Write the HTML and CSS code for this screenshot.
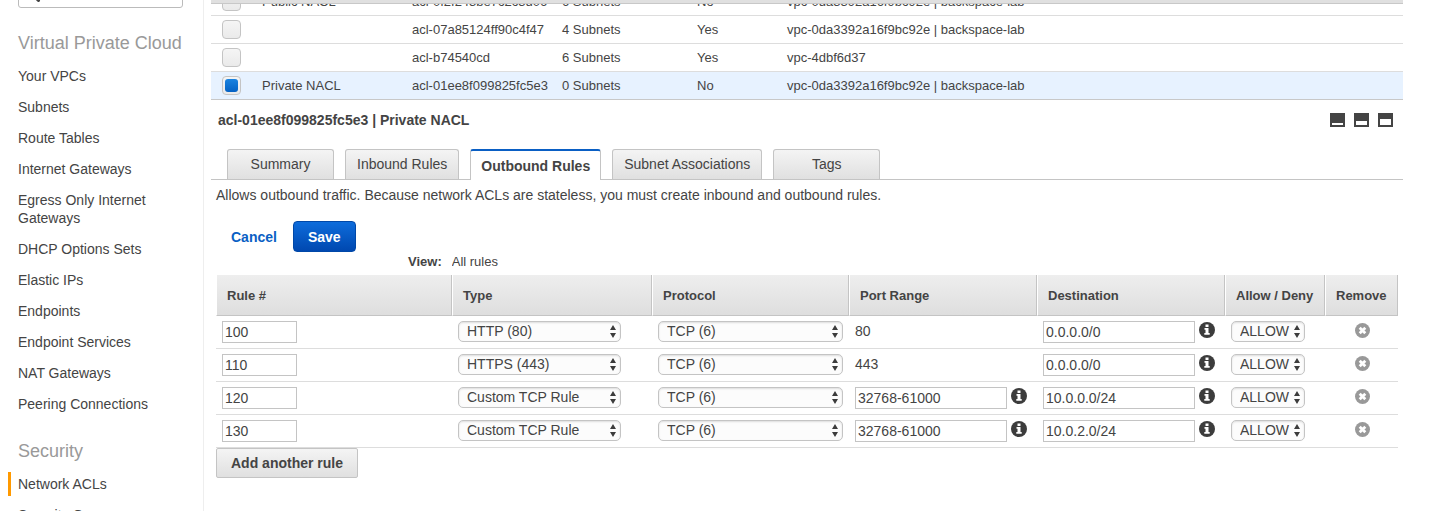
FILE: index.html
```html
<!DOCTYPE html>
<html lang="en">
<head>
<meta charset="utf-8">
<title>Network ACLs</title>
<link rel="stylesheet" href="styles.css">
</head>
<body>
<svg class="sprite" aria-hidden="true">
  <symbol id="info" viewBox="0 0 16 16"><circle cx="8" cy="8" r="8" fill="#3c3c3c"/><path fill="#fff" d="M6.500 2.500h3v2.500h-3zM5.500 6h4v5h1.200v1.800H5.300V11h1.200V7.700h-1z"/></symbol>
  <symbol id="remove" viewBox="0 0 15 15"><circle cx="7.500" cy="7.500" r="7.500" fill="#999"/><path stroke="#fff" stroke-width="2.800" d="M4.700 4.700l5.600 5.600M10.300 4.700l-5.600 5.600"/></symbol>
  <symbol id="arrows" viewBox="0 0 6 13"><path fill="#3c3c3c" d="M3 0l3 5H0zM3 13l3-5H0z"/></symbol>
</svg>
<div class="console">
  <nav class="sidebar" aria-label="VPC">
    <div class="filter">
      <div class="filter-box">
        <svg width="16" height="16" viewBox="0 0 16 16" aria-hidden="true"><circle cx="6" cy="6" r="4.500" fill="none" stroke="#444" stroke-width="2"/><path stroke="#444" stroke-width="3" stroke-linecap="round" d="M10 10l3.500 3.500"/></svg>
        <input type="search" aria-label="Filter by VPC">
      </div>
    </div>
    <h2>Virtual Private Cloud</h2>
    <ul>
      <li><a href="#">Your VPCs</a></li>
      <li><a href="#">Subnets</a></li>
      <li><a href="#">Route Tables</a></li>
      <li><a href="#">Internet Gateways</a></li>
      <li><a href="#">Egress Only Internet Gateways</a></li>
      <li><a href="#">DHCP Options Sets</a></li>
      <li><a href="#">Elastic IPs</a></li>
      <li><a href="#">Endpoints</a></li>
      <li><a href="#">Endpoint Services</a></li>
      <li><a href="#">NAT Gateways</a></li>
      <li><a href="#">Peering Connections</a></li>
    </ul>
    <h2>Security</h2>
    <ul>
      <li><a class="current" href="#">Network ACLs</a></li>
      <li><a href="#">Security Groups</a></li>
    </ul>
  </nav>

  <main class="main">
    <div class="list-head"></div>
    <div class="list-view">
      <table class="list">
        <colgroup><col class="l-check"><col class="l-name"><col class="l-id"><col class="l-sub"><col class="l-def"><col></colgroup>
        <tbody>
          <tr><td><input type="checkbox" aria-label="Public NACL"></td><td>Public NACL</td><td>acl-0f2f243be7c2c3d06</td><td>6 Subnets</td><td>No</td><td>vpc-0da3392a16f9bc92e | backspace-lab</td></tr>
          <tr><td><input type="checkbox" aria-label="acl-07a85124ff90c4f47"></td><td></td><td>acl-07a85124ff90c4f47</td><td>4 Subnets</td><td>Yes</td><td>vpc-0da3392a16f9bc92e | backspace-lab</td></tr>
          <tr><td><input type="checkbox" aria-label="acl-b74540cd"></td><td></td><td>acl-b74540cd</td><td>6 Subnets</td><td>Yes</td><td>vpc-4dbf6d37</td></tr>
          <tr class="selected"><td><input type="checkbox" aria-label="Private NACL" checked></td><td>Private NACL</td><td>acl-01ee8f099825fc5e3</td><td>0 Subnets</td><td>No</td><td>vpc-0da3392a16f9bc92e | backspace-lab</td></tr>
        </tbody>
      </table>
    </div>

    <header class="detail-head">
      <h1>acl-01ee8f099825fc5e3 | Private NACL</h1>
      <div class="panes">
        <button type="button" aria-label="Small pane"><svg width="15" height="14"><path fill="#444" d="M0 0h15v14H0z"/><path fill="#fff" d="M2 10h11v2H2z"/></svg></button>
        <button type="button" aria-label="Half pane"><svg width="15" height="14"><path fill="#444" d="M0 0h15v14H0z"/><path fill="#fff" d="M2 8h11v4H2z"/></svg></button>
        <button type="button" aria-label="Full pane"><svg width="15" height="14"><path fill="#444" d="M0 0h15v14H0z"/><path fill="#fff" d="M2 6h11v6H2z"/></svg></button>
      </div>
    </header>

    <div class="tabs" role="tablist">
      <button type="button" role="tab">Summary</button>
      <button type="button" role="tab">Inbound Rules</button>
      <button type="button" role="tab" class="active" aria-selected="true">Outbound Rules</button>
      <button type="button" role="tab">Subnet Associations</button>
      <button type="button" role="tab">Tags</button>
    </div>

    <section class="detail">
      <p>Allows outbound traffic. Because network ACLs are stateless, you must create inbound and outbound rules.</p>
      <div class="actions">
        <button type="button" class="cancel">Cancel</button>
        <button type="button" class="save">Save</button>
      </div>
      <div class="view">
        <label for="view">View:</label>
        <select id="view"><option>All rules</option></select>
      </div>

      <table class="rules">
        <colgroup><col><col class="r-type"><col class="r-proto"><col class="r-wide"><col class="r-wide"><col class="r-allow"><col class="r-remove"></colgroup>
        <thead>
          <tr><th>Rule #</th><th>Type</th><th>Protocol</th><th>Port Range</th><th>Destination</th><th>Allow / Deny</th><th>Remove</th></tr>
        </thead>
        <tbody>
          <tr>
            <td><input class="num" aria-label="Rule number" value="100"></td>
            <td><span class="pick"><select aria-label="Type"><option>HTTP (80)</option></select><svg><use href="#arrows"/></svg></span></td>
            <td><span class="pick"><select aria-label="Protocol"><option>TCP (6)</option></select><svg><use href="#arrows"/></svg></span></td>
            <td><span class="port">80</span></td>
            <td><div class="field"><input aria-label="Destination" value="0.0.0.0/0"><svg><use href="#info"/></svg></div></td>
            <td><span class="pick"><select aria-label="Allow or deny"><option>ALLOW</option></select><svg><use href="#arrows"/></svg></span></td>
            <td><button type="button" class="remove" aria-label="Remove rule 100"><svg><use href="#remove"/></svg></button></td>
          </tr>
          <tr>
            <td><input class="num" aria-label="Rule number" value="110"></td>
            <td><span class="pick"><select aria-label="Type"><option>HTTPS (443)</option></select><svg><use href="#arrows"/></svg></span></td>
            <td><span class="pick"><select aria-label="Protocol"><option>TCP (6)</option></select><svg><use href="#arrows"/></svg></span></td>
            <td><span class="port">443</span></td>
            <td><div class="field"><input aria-label="Destination" value="0.0.0.0/0"><svg><use href="#info"/></svg></div></td>
            <td><span class="pick"><select aria-label="Allow or deny"><option>ALLOW</option></select><svg><use href="#arrows"/></svg></span></td>
            <td><button type="button" class="remove" aria-label="Remove rule 110"><svg><use href="#remove"/></svg></button></td>
          </tr>
          <tr>
            <td><input class="num" aria-label="Rule number" value="120"></td>
            <td><span class="pick"><select aria-label="Type"><option>Custom TCP Rule</option></select><svg><use href="#arrows"/></svg></span></td>
            <td><span class="pick"><select aria-label="Protocol"><option>TCP (6)</option></select><svg><use href="#arrows"/></svg></span></td>
            <td><div class="field"><input aria-label="Port range" value="32768-61000"><svg><use href="#info"/></svg></div></td>
            <td><div class="field"><input aria-label="Destination" value="10.0.0.0/24"><svg><use href="#info"/></svg></div></td>
            <td><span class="pick"><select aria-label="Allow or deny"><option>ALLOW</option></select><svg><use href="#arrows"/></svg></span></td>
            <td><button type="button" class="remove" aria-label="Remove rule 120"><svg><use href="#remove"/></svg></button></td>
          </tr>
          <tr>
            <td><input class="num" aria-label="Rule number" value="130"></td>
            <td><span class="pick"><select aria-label="Type"><option>Custom TCP Rule</option></select><svg><use href="#arrows"/></svg></span></td>
            <td><span class="pick"><select aria-label="Protocol"><option>TCP (6)</option></select><svg><use href="#arrows"/></svg></span></td>
            <td><div class="field"><input aria-label="Port range" value="32768-61000"><svg><use href="#info"/></svg></div></td>
            <td><div class="field"><input aria-label="Destination" value="10.0.2.0/24"><svg><use href="#info"/></svg></div></td>
            <td><span class="pick"><select aria-label="Allow or deny"><option>ALLOW</option></select><svg><use href="#arrows"/></svg></span></td>
            <td><button type="button" class="remove" aria-label="Remove rule 130"><svg><use href="#remove"/></svg></button></td>
          </tr>
        </tbody>
      </table>
      <button type="button" class="add">Add another rule</button>
    </section>
  </main>
</div>
</body>
</html>
```
FILE: styles.css
```css
* { box-sizing: border-box; }

body {
  margin: 0;
  height: 100vh;
  overflow: hidden;
  background: #fff;
  color: #444;
  font: 14px/18px "Liberation Sans", Arial, sans-serif;
}

button, input, select {
  margin: 0;
  font: inherit;
  color: inherit;
}

button { cursor: pointer; }
h1, h2, p, ul { margin: 0; padding: 0; }
svg { display: block; }
table { border-collapse: separate; border-spacing: 0; table-layout: fixed; width: 100%; }
.sprite { display: none; }

.console { display: flex; height: 100%; overflow: hidden; }

/* Sidebar */
.sidebar {
  flex: 0 0 204px;
  min-width: 0;
  padding: 0 20px 0 18px;
  border-right: 1px solid #eee;
}

.filter {
  display: flex;
  flex-direction: column;
  justify-content: flex-end;
  height: 8px;
  overflow: hidden;
}

.filter-box {
  display: flex;
  flex: none;
  align-items: center;
  height: 26px;
  padding-left: 6px;
  border: 1px solid #bbb;
  border-radius: 3px;
}

.filter-box input { flex: 1; min-width: 0; border: 0; background: none; }
.filter-box svg { flex: none; }

.sidebar h2 {
  margin: 24px 0 10px;
  color: #999;
  font-size: 18px;
  font-weight: 400;
  line-height: 22px;
  white-space: nowrap;
}

.sidebar ul { display: grid; gap: 7px; list-style: none; }

.sidebar a {
  display: block;
  margin-left: -10px;
  padding: 3px 0 3px 7px;
  border-left: 3px solid transparent;
  color: #444;
  text-decoration: none;
}

.sidebar a.current { border-left-color: #f90; }

/* ACL list */
.main { flex: 1; min-width: 0; padding: 0 30px 0 7px; }
.list-head { height: 4px; background: #e0e0e0; border-bottom: 1px solid #c8c8c8; }

.list-view {
  display: flex;
  flex-direction: column;
  justify-content: flex-end;
  height: 96px;
  overflow: hidden;
}

.list { flex: none; font-size: 13px; }
.l-check { width: 51px; }
.l-name, .l-id { width: 150px; }
.l-sub { width: 135px; }
.l-def { width: 90px; }
.list td { height: 28px; padding: 0; border-bottom: 1px solid #ddd; white-space: nowrap; }
.list .selected td { background: #e7f2ff; border-bottom-color: #c8c8c8; }

.list input {
  appearance: none;
  display: block;
  width: 19px;
  height: 19px;
  margin-left: 11px;
  padding: 2px;
  border: 1px solid #c4c4c4;
  border-radius: 4px;
  background: linear-gradient(#f5f5f5, #eaeaea);
}

.list input:checked::before {
  content: "";
  display: block;
  width: 13px;
  height: 13px;
  border-radius: 3px;
  background: linear-gradient(#1a83e0, #0562c4);
}

/* Detail pane */
.detail-head {
  display: flex;
  align-items: center;
  justify-content: space-between;
  height: 40px;
  padding: 0 10px 0 7px;
}

.detail-head h1 { font-size: 14px; line-height: 18px; }
.panes { display: flex; gap: 9px; }
.panes button { padding: 0; border: 0; background: none; }

.tabs {
  display: flex;
  gap: 11px;
  height: 40px;
  padding: 9px 16px 0;
  border-bottom: 1px solid #c4c4c4;
}

.tabs button {
  min-width: 107px;
  padding: 0 11px 2px;
  border: 1px solid #c4c4c4;
  border-bottom: 0;
  border-radius: 3px 3px 0 0;
  background: linear-gradient(#f4f4f4, #e0e0e0);
  white-space: nowrap;
}

.tabs .active {
  margin-bottom: -1px;
  padding: 0 10px;
  border-top: 2px solid #0a5fc4;
  background: #fff;
  font-weight: 700;
}

.detail { padding: 6px 5px 0; }
.actions { display: flex; gap: 1px; margin-top: 17px; }

.actions button {
  height: 31px;
  padding: 0 15px;
  border: 0;
  font-weight: 700;
}

.actions .cancel { background: none; color: #0a5fc4; }

.actions .save {
  padding: 0 14px;
  border: 1px solid #0048a8;
  border-radius: 4px;
  background: linear-gradient(#0d6cdb, #0048b0);
  color: #fff;
}

.view {
  display: flex;
  align-items: center;
  gap: 10px;
  height: 18px;
  margin: 1px 0 4px;
  padding-left: 192px;
  font-size: 13px;
}

.view label { font-weight: 700; }
.view select { appearance: none; padding: 0; border: 0; background: none; }

/* Rules table */
.r-type { width: 200px; }
.r-proto { width: 197px; }
.r-wide { width: 188px; }
.r-allow { width: 100px; }
.r-remove { width: 73px; }

.rules th {
  height: 41px;
  padding: 2px 0 0 10px;
  border-bottom: 1px solid #c4c4c4;
  border-left: 1px solid #fff;
  border-right: 1px solid #c4c4c4;
  background: linear-gradient(#eee, #dedede);
  font-size: 13px;
  text-align: left;
  white-space: nowrap;
}

.rules td {
  height: 33px;
  padding: 5px 6px;
  border-bottom: 1px solid #ddd;
  vertical-align: top;
}

.rules td:last-child { padding-right: 4px; }

.rules input {
  display: block;
  width: 152px;
  height: 22px;
  padding: 0 2px;
  border: 1px solid #c4c4c4;
  background: #fff;
}

.rules .num { width: 75px; }
.field { display: flex; gap: 4px; }
.field svg { flex: none; width: 16px; height: 16px; margin-top: 1px; }
.port { display: block; line-height: 21px; }

.pick { display: grid; align-items: center; }
.rules td:nth-child(2) .pick { width: 163px; }
.rules td:nth-child(3) .pick { width: 185px; }
.rules td:nth-child(6) .pick { width: 74px; }

.pick select {
  grid-area: 1 / 1;
  appearance: none;
  height: 21px;
  padding: 0 0 2px 8px;
  border: 1px solid #c4c4c4;
  border-radius: 5px;
  background: #fcfcfc;
  box-shadow: inset 0 1px 2px #ddd;
}

.pick svg {
  grid-area: 1 / 1;
  justify-self: end;
  width: 6px;
  height: 13px;
  margin-right: 5px;
  pointer-events: none;
}

.remove {
  display: block;
  margin: 2px auto 0;
  padding: 0;
  border: 0;
  background: none;
}

.remove svg { width: 15px; height: 15px; }

.add {
  display: block;
  height: 30px;
  padding: 0 14px;
  border: 1px solid #c4c4c4;
  border-radius: 2px;
  background: linear-gradient(#f4f4f4, #e0e0e0);
  font-weight: 700;
}
```
